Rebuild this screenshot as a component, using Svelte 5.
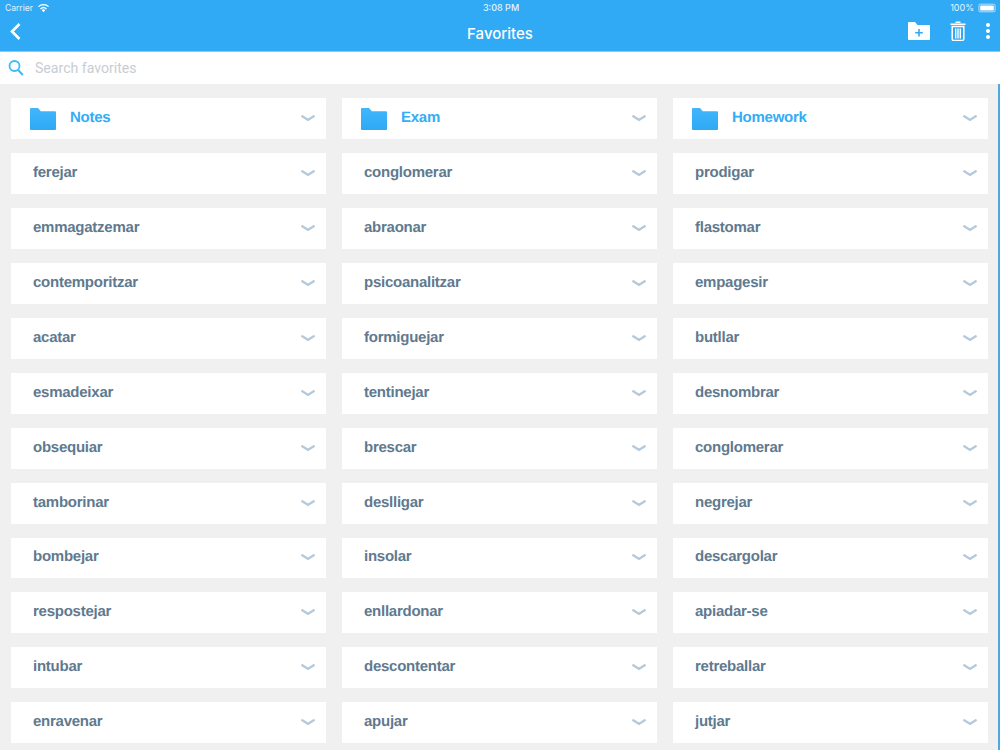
<script>
  const columns = [
    { folder: "Notes", words: ["ferejar", "emmagatzemar", "contemporitzar", "acatar", "esmadeixar", "obsequiar", "tamborinar", "bombejar", "respostejar", "intubar", "enravenar"] },
    { folder: "Exam", words: ["conglomerar", "abraonar", "psicoanalitzar", "formiguejar", "tentinejar", "brescar", "deslligar", "insolar", "enllardonar", "descontentar", "apujar"] },
    { folder: "Homework", words: ["prodigar", "flastomar", "empagesir", "butllar", "desnombrar", "conglomerar", "negrejar", "descargolar", "apiadar-se", "retreballar", "jutjar"] }
  ];

  // the grid fills row by row, so flatten the columns
  const cells = [];
  for (let row = 0; row < 12; row++) {
    for (const col of columns) {
      if (row === 0) cells.push({ label: col.folder, isFolder: true });
      else cells.push({ label: col.words[row - 1], isFolder: false });
    }
  }
</script>

<div class="page">
  <header class="topbar">
    <div class="status">
      <div class="status-left">
        <span class="carrier">Carrier</span>
        <svg width="13" height="10" viewBox="0 0 13 10">
          <path d="M6.500 9.200 4.600 7.100a2.800 2.800 0 0 1 3.800 0Z" fill="#fff" />
          <path d="M3.500 5.900a4.400 4.400 0 0 1 6 0M1.400 3.600a7.400 7.400 0 0 1 10.200 0" fill="none" stroke="#fff" stroke-width="1.300" />
        </svg>
      </div>
      <span class="clock">3:08 PM</span>
      <div class="status-right">
        <span>100%</span>
        <div class="battery"><div class="battery-fill"></div></div>
      </div>
    </div>
    <div class="nav">
      <svg class="back" width="12" height="17" viewBox="0 0 12 17">
        <path d="M10.500 1 3 8.500l7.500 7.500" fill="none" stroke="#fff" stroke-width="2.600" />
      </svg>
      <h1>Favorites</h1>
      <div class="actions">
        <svg width="22" height="18" viewBox="0 0 22 18">
          <path fill-rule="evenodd" d="M0 1a1 1 0 0 1 1-1h6l2.500 3H21a1 1 0 0 1 1 1v13a1 1 0 0 1-1 1H1a1 1 0 0 1-1-1ZM10.200 7v3H7.200v1.500h3v3h1.600v-3h3V10h-3V7Z" fill="#fff" />
        </svg>
        <svg width="16" height="20" viewBox="0 0 16 20">
          <path d="M0.500 2.500h15V4H.5ZM5.500 .5h5v1.500h-5Z" fill="#fff" />
          <path d="M2.200 5.500h11.600V18a1.500 1.500 0 0 1-1.500 1.500H3.700A1.500 1.500 0 0 1 2.200 18Z" fill="none" stroke="#fff" stroke-width="1.500" />
          <path d="M5.700 7.500v10M8 7.500v10M10.300 7.500v10" stroke="#fff" stroke-width="1.400" />
        </svg>
        <div class="dots"><i></i><i></i><i></i></div>
      </div>
    </div>
  </header>

  <div class="search">
    <svg width="16" height="18" viewBox="0 0 16 18">
      <circle cx="6.500" cy="7" r="5" fill="none" stroke="#38bdf8" stroke-width="1.800" />
      <path d="m10.200 11 4.600 5" stroke="#38bdf8" stroke-width="2" />
    </svg>
    <span>Search favorites</span>
  </div>

  <main class="list">
    {#each cells as cell}
      <div class="card" class:folder={cell.isFolder}>
        {#if cell.isFolder}
          <svg class="folder-icon" width="26" height="22" viewBox="0 0 26 22">
            <defs>
              <linearGradient id="folder-fill" x1="0" y1="0" x2="0" y2="1">
                <stop offset="0" stop-color="#41b6fb" />
                <stop offset="1" stop-color="#2fa9f5" />
              </linearGradient>
            </defs>
            <path d="M0 1a1 1 0 0 1 1-1h7l2.800 3.200H25a1 1 0 0 1 1 1V21a1 1 0 0 1-1 1H1a1 1 0 0 1-1-1Z" fill="url(#folder-fill)" />
          </svg>
        {/if}
        <span class="label">{cell.label}</span>
        <svg class="chevron" width="14" height="7" viewBox="0 0 14 7">
          <path d="M1.300 1.300 7 4.900 12.700 1.300" fill="none" stroke="#b4c9dc" stroke-width="2.400" stroke-linecap="round" />
        </svg>
      </div>
    {/each}
  </main>
  <div class="scrollbar"></div>
</div>

<style>
  :global(body) {
    margin: 0;
    background: #f0f0f0;
    font-family: Inter, "Liberation Sans", sans-serif;
  }

  .page {
    position: relative;
    height: 750px;
    overflow: hidden;
    background: #f0f0f0;
  }

  .topbar {
    height: 51px;
    background: #30aaf5;
    border-bottom: 1px solid #7fcdf9;
    color: #fff;
  }

  .status {
    display: grid;
    grid-template-columns: 1fr auto 1fr;
    align-items: center;
    height: 15px;
    padding: 0 3px 0 5px;
    font-size: 9px;
    color: #e4f4fe;
  }

  .status-left {
    display: flex;
    align-items: center;
    gap: 4px;
  }

  .carrier {
    font-size: 8.500px;
  }

  .clock {
    font-weight: 500;
  }

  .status-right {
    display: flex;
    align-items: center;
    justify-content: flex-end;
    gap: 3px;
  }

  .battery {
    width: 16px;
    height: 6px;
    padding: 1px;
    border: 1px solid #cdeafd;
    border-radius: 2px;
    box-sizing: content-box;
    transform: scale(0.85);
  }

  .battery-fill {
    height: 100%;
    background: #fff;
    border-radius: 1px;
  }

  .nav {
    position: relative;
    display: flex;
    align-items: center;
    justify-content: center;
    height: 36px;
  }

  .back {
    position: absolute;
    left: 9px;
    top: 8px;
  }

  h1 {
    margin: 0;
    font-size: 15px;
    font-weight: 500;
  }

  .actions {
    position: absolute;
    right: 10px;
    top: 6px;
    display: flex;
    align-items: center;
    gap: 20px;
  }

  .dots {
    display: flex;
    flex-direction: column;
    gap: 1.500px;
  }

  .dots i {
    display: block;
    width: 4.500px;
    height: 4.500px;
    border-radius: 50%;
    background: #fff;
  }

  .search {
    display: flex;
    align-items: center;
    gap: 11px;
    height: 32px;
    padding-left: 8px;
    background: #fff;
    font-family: Roboto, sans-serif;
    font-size: 14.100px;
    color: #c9cdd2;
  }

  .list {
    display: grid;
    grid-template-columns: repeat(3, 315px);
    grid-auto-rows: 40.900px;
    column-gap: 16px;
    row-gap: 14px;
    padding: 14.400px 0 0 11px;
  }

  .card {
    display: flex;
    align-items: center;
    padding: 0 11px 0 22px;
    background: #fff;
  }

  .card.folder {
    padding-left: 19px;
  }

  .folder-icon {
    margin-right: 14px;
  }

  .label {
    flex: 1;
    margin-bottom: 2px;
    font-family: "Liberation Sans", Arial, sans-serif;
    font-size: 15px;
    font-weight: 700;
    letter-spacing: -0.250px;
    text-rendering: geometricPrecision;
    color: #5f7a8f;
  }

  .folder .label {
    color: #33adf6;
  }

  .scrollbar {
    position: absolute;
    top: 84px;
    right: 0;
    bottom: 0;
    width: 2px;
    background: #4fa8e0;
  }
</style>
